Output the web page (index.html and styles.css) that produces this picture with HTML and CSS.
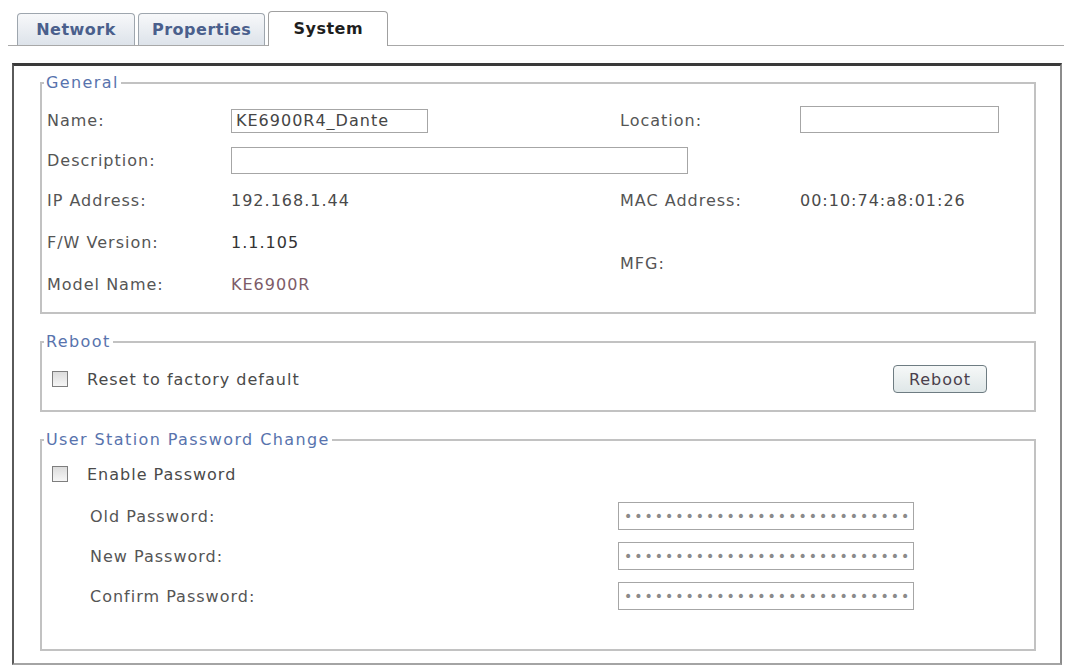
FILE: index.html
```html
<!DOCTYPE html>
<html lang="en">

<head>
    <meta charset="UTF-8">
    <title>System</title>
    <link rel="stylesheet" href="styles.css">
</head>
<body>

    <div class="tabs">
        <div class="tab">Network</div>
        <div class="tab">Properties</div>
        <div class="tab tab-active">System</div>
    </div>

    <div class="panel">
        <fieldset class="group group-general">
            <legend>General</legend>
            <div class="general-grid">
                <div class="label">Name:</div>
                <div class="cell"><input class="field field-name" type="text" value="KE6900R4_Dante"></div>
                <div class="label">Location:</div>
                <div class="cell"><input class="field field-location" type="text" value=""></div>

                <div class="label">Description:</div>
                <div class="cell cell-wide"><input class="field field-desc" type="text" value=""></div>
                <div class="cell"></div>

                <div class="label">IP Address:</div>
                <div class="value">192.168.1.44</div>
                <div class="label">MAC Address:</div>
                <div class="value">00:10:74:a8:01:26</div>

                <div class="label">F/W Version:</div>
                <div class="value value-dark">1.1.105</div>
                <div class="label label-mfg">MFG:</div>
                <div class="value value-mfg"></div>

                <div class="label">Model Name:</div>
                <div class="value value-model">KE6900R</div>
            </div>
        </fieldset>

        <fieldset class="group group-reboot">
            <legend>Reboot</legend>
            <div class="reboot-row">
                <label class="check"><input type="checkbox"> Reset to factory default</label>
                <button class="btn">Reboot</button>
            </div>
        </fieldset>

        <fieldset class="group group-password">
            <legend>User Station Password Change</legend>
            <label class="check check-pass"><input type="checkbox"> Enable Password</label>
            <div class="pass-grid">
                <div class="label">Old Password:</div>
                <input class="field field-pass" type="password" value="aaaaaaaaaaaaaaaaaaaaaaaaaaaaaaaa">
                <div class="label">New Password:</div>
                <input class="field field-pass" type="password" value="aaaaaaaaaaaaaaaaaaaaaaaaaaaaaaaa">
                <div class="label">Confirm Password:</div>
                <input class="field field-pass" type="password" value="aaaaaaaaaaaaaaaaaaaaaaaaaaaaaaaa">
            </div>
        </fieldset>
    </div>

</body>

</html>
```

FILE: styles.css
```css
body {
    margin: 0;
    background-color: #fff;
    font-family: 'DejaVu Sans', Verdana, sans-serif;
    font-size: 16px;
    letter-spacing: 1px;
    color: #4e4e4e;
}

/* tab strip */
.tabs {
    display: flex;
    align-items: flex-end;
    gap: 3px;
    height: 34px;
    margin: 0 4px 0 8px;
    padding: 11px 0 0 9px;
    border-bottom: 1px solid #a8a8a8;
}

.tab {
    box-sizing: border-box;
    min-width: 118px;
    height: 32px;
    padding: 0 13px;
    line-height: 31px;
    text-align: center;
    font-weight: bold;
    letter-spacing: 0.5px;
    color: #4a5f8c;
    background: linear-gradient(#f7f8fa, #dde3ea);
    border: 1px solid #9ea6ae;
    border-bottom: none;
    border-radius: 4px 4px 0 0;
}

.tab-active {
    min-width: 120px;
    height: 35px;
    margin-bottom: -1px;
    line-height: 34px;
    color: #1e1e1e;
    background: #fff;
    border-color: #a0a0a0;
}

/* main panel */
.panel {
    display: flex;
    flex-direction: column;
    gap: 18px;
    height: 602px;
    box-sizing: border-box;
    margin: 17px 6px 0 12px;
    padding: 7px 24px 10px 26px;
    border-top: 3px solid #3a3a3a;
    border-left: 2px solid #5a5a5a;
    border-right: 2px solid #8c8c8c;
    border-bottom: 2px solid #a4a4a4;
}

.group {
    margin: 0;
    padding: 8px 5px 7px;
    min-width: 0;
    border: 2px solid #c2c2c2;
}

.group legend {
    margin-left: -3px;
    padding: 0 2px;
    line-height: 20px;
    letter-spacing: 1.4px;
    color: #5873ad;
}

.label {
    color: #555;
}

/* general */
.general-grid {
    display: grid;
    grid-template-columns: 184px 389px 180px 1fr;
    grid-template-rows: 39px 40px 41px 42px 42px;
    align-items: center;
}

.cell-wide {
    grid-column: span 2;
}

.label-mfg,
.value-mfg {
    grid-row: 4 / 6;
}

.label-mfg {
    grid-column: 3;
}

.value-mfg {
    grid-column: 4;
}

.value {
    color: #4a4a4a;
}

.value-dark {
    color: #333;
}

.value-model {
    color: #7d5c68;
}

.field {
    box-sizing: border-box;
    margin: 0;
    padding: 0 4px;
    font-family: inherit;
    font-size: 16px;
    letter-spacing: 1px;
    color: #454545;
    background: #fff;
    border: 1px solid #a6a6a6;
    outline: none;
}

.field-name {
    display: block;
    width: 197px;
    height: 24px;
}

.field-location {
    display: block;
    width: 199px;
    height: 27px;
    margin-top: -3px;
}

.field-desc {
    display: block;
    width: 457px;
    height: 27px;
}

/* reboot */
.group-reboot {
    padding: 12px 5px 16px;
}

.reboot-row {
    display: flex;
    align-items: center;
    justify-content: space-between;
    height: 30px;
}

.check {
    display: flex;
    align-items: center;
    gap: 19px;
    margin-left: 5px;
    color: #4a4a4a;
}

.check input {
    appearance: none;
    width: 16px;
    height: 16px;
    margin: 0;
    background: linear-gradient(#dcdcdc, #f6f6f6);
    border: 1px solid #7e7e7e;
}

.btn {
    width: 94px;
    height: 28px;
    margin-right: 42px;
    font-family: inherit;
    font-size: 16px;
    letter-spacing: 1px;
    color: #4a3f4c;
    background: linear-gradient(#f6f8f8, #dfe7e8);
    border: 1px solid #6e7c82;
    border-radius: 4px;
}

/* password */
.group-password {
    padding: 10px 5px 33px;
}

.check-pass {
    height: 28px;
}

.pass-grid {
    display: grid;
    grid-template-columns: 528px 296px;
    grid-auto-rows: 40px;
    align-items: center;
    margin: 8px 0 0 43px;
}

.field-pass {
    width: 296px;
    height: 28px;
    padding: 0 5px;
    font-size: 14px;
    letter-spacing: 2px;
    color: #8a8a8a;
}
```
